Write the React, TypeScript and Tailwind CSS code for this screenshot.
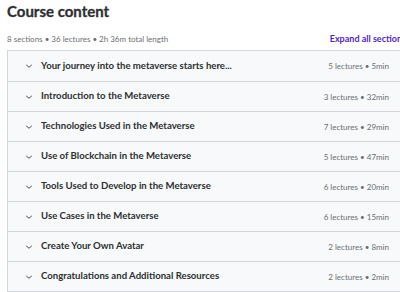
const sections = [
  { title: 'Your journey into the metaverse starts here...', meta: '5 lectures • 5min' },
  { title: 'Introduction to the Metaverse', meta: '3 lectures • 32min' },
  { title: 'Technologies Used in the Metaverse', meta: '7 lectures • 29min' },
  { title: 'Use of Blockchain in the Metaverse', meta: '5 lectures • 47min' },
  { title: 'Tools Used to Develop in the Metaverse', meta: '6 lectures • 20min' },
  { title: 'Use Cases in the Metaverse', meta: '6 lectures • 15min' },
  { title: 'Create Your Own Avatar', meta: '2 lectures • 8min' },
  { title: 'Congratulations and Additional Resources', meta: '2 lectures • 2min' },
]

function Chevron() {
  return (
    <svg width="10" height="10" viewBox="0 0 24 24" fill="none" stroke="#3e4143" strokeWidth="2.2" strokeLinecap="round" strokeLinejoin="round">
      <path d="M6 10l6 5 6-5" />
    </svg>
  )
}

export default function App() {
  return (
    <div className="w-[400px] h-[292px] overflow-hidden bg-white font-['Lato',sans-serif] text-[#2d2f31]">
      <div className="w-[412px] pl-[7px]">
        <h2 className="text-[15px] leading-[20px] font-bold pt-[1px] [-webkit-text-stroke:0.3px_#2d2f31]">Course content</h2>
        <div className="flex items-center justify-between mt-[12px] h-[12px]">
          <span className="text-[8px] text-[#6a6f73]">8 sections • 36 lectures • 2h 36m total length</span>
          <span className="text-[9px] font-bold text-[#5624d0] pr-[6px]">Expand all sections</span>
        </div>
        <div className="mt-[5px] border border-[#d1d7dc]">
          {sections.map((s, i) => (
            <div
              key={i}
              className={`flex items-center h-[30px] bg-[#f7f9fa] pl-[16px] pr-[22px] ${i > 0 ? 'border-t border-[#d1d7dc]' : ''}`}
            >
              <span className="w-[17px] flex items-center"><Chevron /></span>
              <span className="flex-1 text-[9.6px] font-bold">{s.title}</span>
              <span className="text-[8px] text-[#6a6f73]">{s.meta}</span>
            </div>
          ))}
        </div>
      </div>
    </div>
  )
}
